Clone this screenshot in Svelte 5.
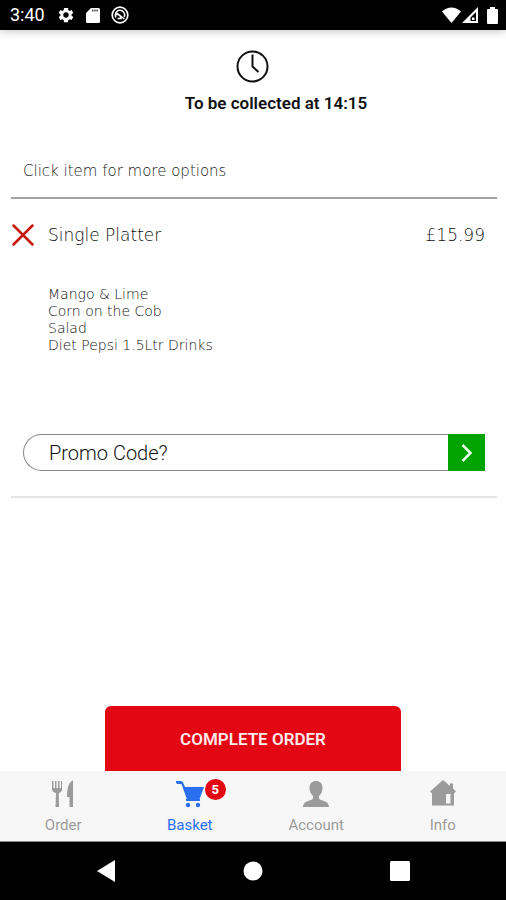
<script>
  let promo = $state('');
  let activeTab = $state('Basket');
  let basketCount = $state(5);

  const item = {
    name: 'Single Platter',
    price: '£15.99',
    options: ['Mango & Lime', 'Corn on the Cob', 'Salad', 'Diet Pepsi 1.5Ltr Drinks']
  };

  const tabs = ['Order', 'Basket', 'Account', 'Info'];
</script>

<div class="screen">
  <header class="status-bar">
    <div class="status-left">
      <span class="time">3:40</span>
      <svg width="18" height="18" viewBox="0 0 24 24" fill="#fff" aria-hidden="true">
        <path fill-rule="evenodd" d="M19.4 13a7.500 7.500 0 0 0 0-2l2.300-1.700-2.200-3.900-2.700 1.100a7 7 0 0 0-1.700-1L14.700 2.500H9.300l-.4 3a7 7 0 0 0-1.700 1L4.500 5.400 2.300 9.300 4.600 11a7.500 7.500 0 0 0 0 2l-2.300 1.700 2.200 3.900 2.700-1.100a7 7 0 0 0 1.700 1l.4 3h5.400l.4-3a7 7 0 0 0 1.700-1l2.700 1.100 2.200-3.900zM12 15.600a3.600 3.600 0 1 1 0-7.200 3.600 3.600 0 0 1 0 7.200z" />
      </svg>
      <svg width="14" height="17" viewBox="0 0 14 17" aria-hidden="true">
        <path d="M5 1h7.500Q14 1 14 2.500v12Q14 16 12.500 16h-11Q0 16 0 14.500V6z" fill="#fff" />
        <path d="M6 3.500h6" stroke="#555" stroke-width="2" stroke-dasharray="1.500 .7" />
      </svg>
      <svg width="18" height="18" viewBox="0 0 18 18" fill="none" stroke="#fff" aria-hidden="true">
        <circle cx="9" cy="9" r="7.800" stroke-width="1.700" />
        <path d="M5 11.500a4.700 4.700 0 1 1 8.200-.5M5.300 6.500l8 6.500M5 9c2-1.500 4.500 0 5 3.500H6.500" stroke-width="1.500" />
      </svg>
    </div>
    <div class="status-right">
      <svg width="19" height="16" viewBox="0 0 19 16" aria-hidden="true">
        <path d="M0 4.500Q9.500-3.500 19 4.500L9.500 16z" fill="#fff" />
      </svg>
      <svg width="16" height="16" viewBox="0 0 16 16" aria-hidden="true">
        <path fill-rule="evenodd" d="M16 0v16H0zM14 5L8.500 10.500V14H14zM10 10.500h2.500V13H10z" fill="#fff" />
      </svg>
      <svg width="11" height="17" viewBox="0 0 11 17" aria-hidden="true">
        <path d="M3 0h5v2h2q1 0 1 1v13q0 1-1 1H1q-1 0-1-1V3q0-1 1-1h2z" fill="#fff" />
      </svg>
    </div>
  </header>

  <main>
    <section class="collection">
      <svg width="33" height="33" viewBox="0 0 33 33" fill="none" stroke="#111" stroke-width="2" aria-hidden="true">
        <circle cx="16.500" cy="16.500" r="15" />
        <path d="M16.500 4.500v12l6 5.500" />
      </svg>
      <h1>To be collected at 14:15</h1>
    </section>

    <p class="hint">Click item for more options</p>

    <section class="basket">
      <div class="item">
        <button class="remove" aria-label="Remove {item.name}">
          <svg width="22" height="22" viewBox="0 0 22 22" fill="none" stroke="#c4190c" stroke-width="2.500" stroke-linecap="round" aria-hidden="true">
            <path d="M1.500 1.500l19 19M20.500 1.500l-19 19" />
          </svg>
        </button>
        <span class="item-name">{item.name}</span>
        <span class="item-price">{item.price}</span>
      </div>
      <ul class="options">
        {#each item.options as option}
          <li>{option}</li>
        {/each}
      </ul>
      <form class="promo" onsubmit={(e) => e.preventDefault()}>
        <input type="text" placeholder="Promo Code?" aria-label="Promo code" bind:value={promo} />
        <button class="apply" aria-label="Apply promo code">
          <svg width="12" height="18" viewBox="0 0 12 18" fill="none" stroke="#e9ffe9" stroke-width="2.500" aria-hidden="true">
            <path d="M1.500 1l8 8-8 8" />
          </svg>
        </button>
      </form>
    </section>
  </main>

  <button class="complete">COMPLETE ORDER</button>

  <nav class="tabs">
    {#each tabs as tab}
      <button class="tab" class:active={activeTab === tab} onclick={() => (activeTab = tab)}>
        <span class="tab-icon">
          {#if tab === 'Order'}
            <svg width="22" height="28" viewBox="0 0 22 28" fill="currentColor" aria-hidden="true">
              <path d="M0 1h1.500v7H3V1h1.500v7H6V1h1.500v7H9V1h1v8q0 3-3.200 4L7 27H3.500L4 13Q0 12 0 9z" />
              <path d="M21 0v27h-3.500V17H15Q14.500 4 21 0z" />
            </svg>
          {:else if tab === 'Basket'}
            <svg width="28" height="28" viewBox="0 0 28 28" fill="currentColor" aria-hidden="true">
              <path d="M0 1h5q1.500 0 2 1.500L9 7h19l-4 11q-.5 1.500-2 1.500H11L5.500 4H1Q0 3.500 0 1z" />
              <path d="M10 20h14" stroke="currentColor" stroke-width="2" />
              <circle cx="12" cy="25" r="2.200" />
              <circle cx="22" cy="25" r="2.200" />
            </svg>
            <span class="badge">{basketCount}</span>
          {:else if tab === 'Account'}
            <svg width="26" height="28" viewBox="0 0 26 28" fill="currentColor" aria-hidden="true">
              <path d="M13 1c4 0 6.500 2.500 6.500 7 0 3.500-1.500 6.500-3.500 8v2c0 1.500 2 2 5 3 3.500 1.200 4.500 2.500 5 6H0c.5-3.500 1.500-4.800 5-6 3-1 5-1.500 5-3v-2c-2-1.500-3.500-4.500-3.500-8C6.500 3.500 9 1 13 1z" />
            </svg>
          {:else}
            <svg width="26" height="28" viewBox="0 0 26 28" fill="currentColor" aria-hidden="true">
              <path fill-rule="evenodd" d="M13 0l7 6V3.500h3v5l3 3-1.500 1.500H24v12.500H2V13H1.500L0 11.500zM16 14v9.500h4.500V14z" />
            </svg>
          {/if}
        </span>
        <span class="tab-label">{tab}</span>
      </button>
    {/each}
  </nav>

  <footer class="system-nav">
    <button aria-label="Back">
      <svg width="20" height="22" viewBox="0 0 20 22" fill="#fff" aria-hidden="true"><path d="M19 0v22L1 11z" /></svg>
    </button>
    <button aria-label="Home">
      <svg width="20" height="20" viewBox="0 0 20 20" fill="#fff" aria-hidden="true"><circle cx="10" cy="10" r="9.500" /></svg>
    </button>
    <button aria-label="Recent apps">
      <svg width="20" height="20" viewBox="0 0 20 20" fill="#fff" aria-hidden="true"><rect width="20" height="20" rx="1.500" /></svg>
    </button>
  </footer>
</div>

<style>
  :global(body) {
    background: #fff;
  }

  .screen {
    display: flex;
    flex-direction: column;
    min-height: 100vh;
    background: #fff;
    font-family: Roboto, sans-serif;
    color: #111;
  }

  button {
    display: flex;
    align-items: center;
    justify-content: center;
    padding: 0;
    border: 0;
    background: none;
    font-family: inherit;
    cursor: pointer;
  }

  .status-bar {
    display: flex;
    align-items: center;
    justify-content: space-between;
    height: 30px;
    padding: 0 8px 0 10px;
    background: #000;
    color: #fff;
    box-shadow: 0 1px 10px rgba(0, 0, 0, 0.25);
  }

  .status-left {
    display: flex;
    align-items: center;
    gap: 11px;
  }

  .time {
    margin-right: 1px;
    font-size: 18px;
    line-height: 32px;
  }

  .status-right {
    display: flex;
    align-items: center;
    gap: 1px;
  }

  .status-right svg:last-child {
    margin-left: 8px;
  }

  main {
    flex: 1;
    padding: 20px 9px 0 11px;
  }

  .collection {
    display: flex;
    flex-direction: column;
    align-items: center;
    gap: 10px;
    padding-right: 4px;
  }

  h1 {
    margin: 0;
    padding-left: 48px;
    font-size: 17px;
    font-weight: 600;
    line-height: 20px;
  }

  .hint {
    margin: 0;
    padding: 48px 12px 16px;
    border-bottom: 2px solid #a3a3a3;
    font-family: 'DejaVu Sans', sans-serif;
    font-size: 15px;
    font-weight: 200;
    line-height: 20px;
    color: #222;
  }

  .basket {
    padding: 24px 12px 25px 0;
    border-bottom: 2px solid #e4e4e4;
    font-family: 'DejaVu Sans', sans-serif;
    font-weight: 200;
    color: #111;
  }

  .item {
    display: flex;
    align-items: center;
    font-size: 17px;
    line-height: 24px;
  }

  .remove {
    width: 24px;
    height: 24px;
  }

  .item-name {
    flex: 1;
    margin-left: 13px;
  }

  .options {
    margin: 0;
    padding: 39px 0 80px 37px;
    list-style: none;
    font-size: 14px;
    line-height: 17px;
  }

  .promo {
    display: flex;
    height: 37px;
    margin-left: 12px;
  }

  .promo input {
    flex: 1;
    min-width: 0;
    padding: 0 25px;
    border: 1px solid #888;
    border-right: 0;
    border-radius: 19px 0 0 19px;
    outline: none;
    background: #fff;
    font-family: Roboto, sans-serif;
    font-size: 20px;
    font-weight: 300;
    color: #111;
  }

  .promo input::placeholder {
    color: #111;
    opacity: 1;
  }

  .apply {
    width: 37px;
    background: #00a300;
  }

  .complete {
    align-self: center;
    width: 58.5%;
    height: 65px;
    border-radius: 6px 6px 0 0;
    background: #e30613;
    font-size: 17px;
    font-weight: 600;
    color: #ffe9e9;
  }

  .tabs {
    display: grid;
    grid-template-columns: repeat(4, 1fr);
    height: 71px;
    border-bottom: 1px solid #888;
    box-sizing: border-box;
    background: #f7f7f7;
  }

  .tab {
    flex-direction: column;
    justify-content: flex-start;
    gap: 7px;
    padding-top: 9px;
    color: #9b9b9b;
  }

  .tab.active {
    color: #2a6ff0;
  }

  .tab-icon {
    position: relative;
    height: 28px;
  }

  .badge {
    position: absolute;
    top: -1px;
    left: 29px;
    width: 21px;
    border-radius: 50%;
    background: #e30613;
    font-size: 13px;
    font-weight: 700;
    line-height: 21px;
    text-align: center;
    color: #fff;
  }

  .tab-label {
    font-size: 15px;
    line-height: 20px;
  }

  .system-nav {
    display: flex;
    align-items: center;
    justify-content: space-around;
    height: 58px;
    padding: 0 32px;
    background: #000;
  }
</style>
